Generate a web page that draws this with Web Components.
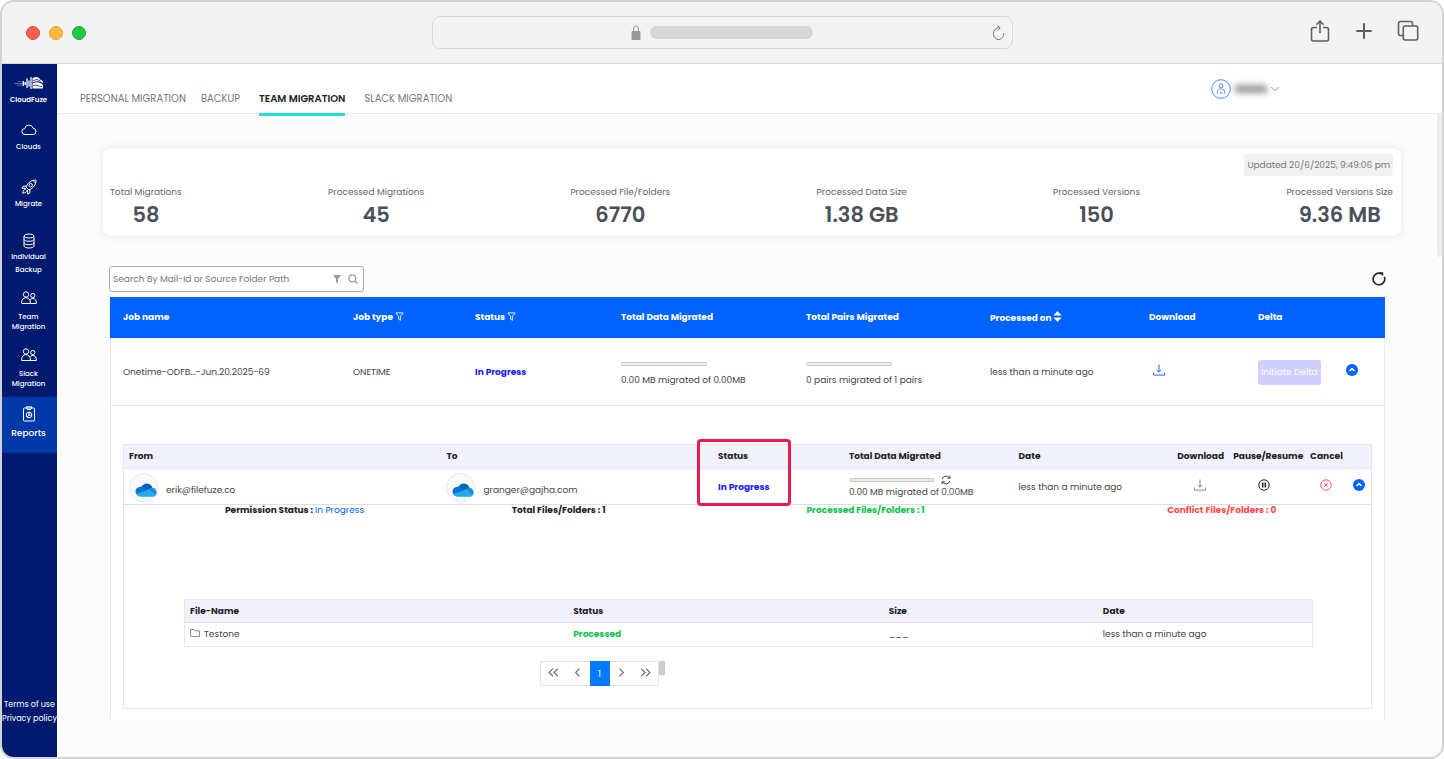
<!DOCTYPE html>
<html lang="en">
<head>
<meta charset="utf-8">
<meta name="viewport" content="width=device-width, initial-scale=1">
<title>CloudFuze - Reports</title>
<style>
    body, html {
        height: 100%;
        margin: 0;
        padding: 0;
        background: #fff;
    }

    body {
        font-family: Poppins, Inter, "Open Sans", sans-serif;
        font-size: 9px;
        color: #444;
    }
</style>
</head>
<body>
<browser-window>
    <side-bar slot="side"></side-bar>
    <top-nav></top-nav>
    <report-page></report-page>
</browser-window>

<script>
const icons = {
    lock: ['0 0 10 16', '<rect x=".5" y="6" width="9" height="9" rx="1" fill="currentColor" stroke="none"/><path d="M2.500 6.500V4a2.500 3 0 0 1 5 0v2.500"/>'],
    reload: ['0 0 12 16', '<path d="M6.500 2.600A5.200 6 0 1 0 11.300 8M5 .5l2.600 2.200L5.500 5.500"/>'],
    share: ['0 0 20 22', '<path d="M7 7.500H3.500a2 2 0 0 0-2 2V19a2 2 0 0 0 2 2h13a2 2 0 0 0 2-2V9.500a2 2 0 0 0-2-2H13M10 13V1.300M6.300 4.800 10 1.200l3.700 3.600"/>'],
    plus: ['0 0 16 16', '<path d="M8 .3v15.400M.3 8h15.400"/>'],
    tabs: ['0 0 22 22', '<rect x="6.300" y="6" width="14.400" height="14" rx="2"/><path d="M6 15.500H3.500a2 2 0 0 1-2-2v-10a2 2 0 0 1 2-2h10a2 2 0 0 1 2 2V6"/>'],
    logo: ['0 0 30 14', '<path d="M.5 7.500h10" stroke-width=".8" opacity=".5"/><path d="M4 5.500h4M3 9.200h5" stroke-width=".6" opacity=".5"/><path d="M9.300 5v5M11.200 6v3M13 2.500v9.500M15 4.500v6M17 1v12" stroke-width="1.300"/><path d="M18.500 2.200C22 .2 25 1 26 3.500c2 .3 3 2 3 4-3-2.800-6-3-10.500-1z" fill="currentColor" stroke="none"/><path d="M18.500 7.500c4-2 7.500-1.400 10.500 1.500v3.500H18.500z" fill="currentColor" stroke="none"/><path d="M19 9.800c3-2 5 .6 9 .8M19 4.800c3-1.800 5-1.300 7.500.2" stroke="#001a6f" stroke-width=".8"/>'],
    cloud: ['0 0 16 16', '<path d="M4 12.500a3 3 0 0 1-.2-6A4.200 4.200 0 0 1 12 6.200a3.200 3.200 0 0 1 .5 6.300z"/>'],
    rocket: ['0 0 16 16', '<path d="M5 8C7 3.500 10.500 1 15 1c0 4.500-2.500 8-7 10zM5.500 7.200 2.200 7 1 9.200l4 .2M8.800 10.500 9 13.800 6.800 15l-.4-4.200M4.500 10.500C2.500 10.500 2 12 1.800 14.200c2.200-.2 3.700-.7 3.700-2.700M12 1.500 14.500 4"/><circle cx="9.700" cy="6.200" r="1.700"/>'],
    database: ['0 0 16 16', '<ellipse cx="8" cy="3" rx="5" ry="2"/><path d="M3 3v10c0 1.200 2.200 2 5 2s5-.8 5-2V3M3 6.300c0 1.200 2.200 2 5 2s5-.8 5-2M3 9.700c0 1.200 2.200 2 5 2s5-.8 5-2"/>'],
    people: ['0 0 16 16', '<circle cx="5" cy="4.500" r="2.700"/><circle cx="11.800" cy="5.500" r="2.100"/><path d="M.7 13.500V12a4.300 4.300 0 0 1 8.600 0v1.500zM9.300 13.500h6V12a3.500 3.500 0 0 0-6-2.500"/>'],
    report: ['0 0 16 16', '<rect x="2.500" y="2" width="11" height="13" rx=".8"/><path d="M5.500 2V.8h5V2l-.7 1.500H6.200z"/><circle cx="8" cy="9" r="2.800"/><path d="M8 6.200V9h2.800M8 9l-2 2"/>'],
    user: ['0 0 20 20', '<circle cx="10" cy="10" r="9.300"/><circle cx="10" cy="6.800" r="2"/><path d="M6.300 15v-1.800a3.700 3.500 0 0 1 7.400 0V15M8.700 15l1.300-2 1.300 2" stroke-width=".8"/>'],
    down: ['0 0 8 6', '<path d="M.5 1.200 4 4.700l3.500-3.500"/>'],
    funnel: ['0 0 10 10', '<path d="M1 1h8L6 5v4.200L4 8V5z"/>'],
    search: ['0 0 10 10', '<circle cx="4.300" cy="4.300" r="3.500"/><path d="m7 7 2.500 2.500"/>'],
    refresh: ['0 0 14 14', '<path d="M9.500 1.800A5.800 5.800 0 1 0 12.300 4.800"/><path d="M7.200.3h4v4z" fill="currentColor" stroke="none"/>'],
    sort: ['0 0 10 12', '<path d="M5 0 9.500 5H.5zM5 12 .5 7h9z" fill="currentColor" stroke="none"/>'],
    download: ['0 0 12 12', '<path d="M6 .5V8M3.800 6 6 8.200 8.200 6M.6 8.500v2.600h10.800V8.500"/>'],
    up: ['0 0 12 12', '<circle cx="6" cy="6" r="6" fill="currentColor" stroke="none"/><path d="M3.500 7 6 4.600 8.500 7" stroke="#fff" stroke-width="1.500"/>'],
    sync: ['0 0 10 10', '<path d="M1.200 4A4 4 0 0 1 8.500 3M8.800 6A4 4 0 0 1 1.500 7M8.900.8v2.500H6.400M1.100 9.200V6.700h2.500"/>'],
    pause: ['0 0 12 12', '<circle cx="6" cy="6" r="5.200"/><path d="M4.700 3.600v4.800M7.300 3.600v4.800" stroke-width="1.500"/>'],
    cancel: ['0 0 12 12', '<circle cx="6" cy="6" r="5.200"/><path d="m4.300 4.300 3.400 3.400M7.700 4.300 4.300 7.700"/>'],
    folder: ['0 0 10 8', '<path d="M.6 7.400V.6H4l1 1.200h4.400v5.600z"/>'],
    first: ['0 0 10 8', '<path d="M4.500.5 1 4l3.500 3.500M9 .5 5.500 4 9 7.500"/>'],
    prev: ['0 0 10 8', '<path d="M6.800.5 3.300 4l3.500 3.500"/>'],
    next: ['0 0 10 8', '<path d="M3.200.5 6.700 4 3.200 7.500"/>'],
    last: ['0 0 10 8', '<path d="M1 .5 4.500 4 1 7.500M5.500.5 9 4 5.500 7.500"/>'],
    onedrive: ['0 0 22 14', '<g stroke="none"><path d="M6.500 4C8 .8 11-.3 14 1c2 .8 3 2.200 3.300 4L11 8z" fill="#0364b8"/><path d="M1.500 11.500C-.8 8.500 1 4 5.500 3.800c2-.1 3.200.6 5 1.700l3 2z" fill="#0078d4"/><path d="M13.500 7C15.500 4.200 19 4.300 20.500 6.500c1.500 2 1.700 4.300.2 5.800z" fill="#1490df"/><path d="M1.500 11.500 12.500 6.800l8.700 4.700c-.8 1.500-1.700 2.200-3.200 2.200H5.500c-1.800 0-3.200-.8-4-2.200z" fill="#28a8ea"/></g>'],
};

class UiIcon extends HTMLElement {

    constructor() {
        super();
        this.attachShadow({mode: "open"});
    }

    connectedCallback() {
        const [box, shape] = icons[this.getAttribute("name")];
        this.shadowRoot.innerHTML = `
        <style>
            :host {
                display: inline-block;
                width: 12px;
                height: 12px;
                line-height: 0;
                flex: none;
            }

            svg {
                width: 100%;
                height: 100%;
                fill: var(--icon-fill, none);
                stroke: currentColor;
                stroke-width: var(--icon-stroke, 1);
            }
        </style>
        <svg viewBox="${box}" aria-hidden="true">${shape}</svg>`;
    }
}

class BrowserWindow extends HTMLElement {

    constructor() {
        super();
        this.attachShadow({mode: "open"});
    }

    connectedCallback() {
        this.shadowRoot.innerHTML = `
        <style>
            :host {
                display: flex;
                flex-direction: column;
                box-sizing: border-box;
                height: 100vh;
                border: 2px solid #d3d3d3;
                border-radius: 14px;
                overflow: hidden;
            }

            button {
                padding: 0;
                border: 0;
                background: none;
                color: inherit;
                line-height: 0;
            }

            .bar {
                display: grid;
                grid-template-columns: 1fr 581px 1fr;
                align-items: center;
                height: 61px;
                flex: none;
                background: #f3f3f3;
                border-bottom: 1px solid #dcdcdc;
                color: #5f5f5f;
            }

            .lights {
                display: flex;
                gap: 9px;
                padding-left: 24px;
            }

            .lights button {
                box-sizing: border-box;
                width: 14px;
                height: 14px;
                border-radius: 50%;
                border: 1px solid #e2483f;
                background: #ff5d55;
            }

            .lights .min {
                border-color: #e0a02f;
                background: #ffba3c;
            }

            .lights .max {
                border-color: #16aa36;
                background: #22c748;
            }

            .address {
                display: flex;
                align-items: center;
                justify-content: center;
                position: relative;
                box-sizing: border-box;
                height: 33px;
                border: 1px solid #d9d9d9;
                border-radius: 8px;
                gap: 9px;
                color: #999;
            }

            .address .url {
                width: 163px;
                height: 13px;
                border-radius: 7px;
                background: #d6d6d6;
            }

            .address ui-icon {
                width: 10px;
                height: 16px;
            }

            .address button {
                position: absolute;
                right: 7px;
                color: #777;
            }

            .address button ui-icon {
                width: 13px;
            }

            .tools {
                display: flex;
                align-items: center;
                justify-content: flex-end;
                gap: 25px;
                padding: 0 23px 3px 0;
                --icon-stroke: 1.6;
            }

            .tools ui-icon {
                width: 22px;
                height: 22px;
            }

            .tools .add ui-icon {
                width: 16px;
                height: 16px;
                --icon-stroke: 2;
            }

            .body {
                display: flex;
                flex: 1;
                min-height: 0;
            }

            main {
                display: flex;
                flex-direction: column;
                flex: 1;
                min-width: 0;
            }
        </style>
        <div class="bar">
            <div class="lights">
                <button aria-label="Close"></button>
                <button class="min" aria-label="Minimize"></button>
                <button class="max" aria-label="Maximize"></button>
            </div>
            <div class="address">
                <ui-icon name="lock"></ui-icon>
                <span class="url"></span>
                <button aria-label="Reload"><ui-icon name="reload"></ui-icon></button>
            </div>
            <div class="tools">
                <button aria-label="Share"><ui-icon name="share"></ui-icon></button>
                <button class="add" aria-label="New tab"><ui-icon name="plus"></ui-icon></button>
                <button aria-label="Tabs"><ui-icon name="tabs"></ui-icon></button>
            </div>
        </div>
        <div class="body">
            <slot name="side"></slot>
            <main><slot></slot></main>
        </div>`;
    }
}

class SideItem extends HTMLElement {

    constructor() {
        super();
        this.attachShadow({mode: "open"});
    }

    connectedCallback() {
        this.shadowRoot.innerHTML = `
        <style>
            :host {
                display: block;
                height: 57px;
            }

            a {
                display: flex;
                flex-direction: column;
                align-items: center;
                gap: 6px;
                box-sizing: border-box;
                height: 100%;
                padding: 7px 2px 0 0;
                color: #fff;
                font-size: 7px;
                font-weight: 500;
                line-height: 10px;
                text-align: center;
                text-decoration: none;
            }

            ui-icon {
                width: 16px;
                height: 16px;
            }

            :host([single]) a {
                padding-top: 10px;
                gap: 4px;
            }

            :host([loose]) a {
                gap: 1px;
                line-height: 13px;
            }

            :host([active]) {
                height: 56px;
            }

            :host([active]) a {
                padding-top: 9px;
                background: #0038a8;
                font-size: 9px;
            }
        </style>
        <a href="#"><ui-icon name="${this.getAttribute("icon")}"></ui-icon><span><slot></slot></span></a>`;
    }
}

class SideBar extends HTMLElement {

    constructor() {
        super();
        this.attachShadow({mode: "open"});
    }

    connectedCallback() {
        this.shadowRoot.innerHTML = `
        <style>
            :host {
                display: flex;
                flex-direction: column;
                flex: none;
                width: 55px;
                background: #001a6f;
                color: #fff;
                font-size: 8px;
                font-weight: 500;
            }

            .logo {
                display: flex;
                flex-direction: column;
                align-items: center;
                gap: 5px;
                box-sizing: border-box;
                height: 48px;
                padding: 12px 2px 0 0;
                font-size: 7px;
                line-height: 10px;
                font-weight: 600;
            }

            .logo ui-icon {
                width: 30px;
                height: 14px;
            }

            footer {
                display: flex;
                flex-direction: column;
                align-items: center;
                margin-top: auto;
                padding-bottom: 31px;
                font-weight: 400;
                line-height: 14px;
                white-space: nowrap;
            }

            a {
                color: inherit;
                text-decoration: none;
            }
        </style>
        <div class="logo"><ui-icon name="logo"></ui-icon><span>CloudFuze</span></div>
        <side-item single icon="cloud">Clouds</side-item>
        <side-item single icon="rocket">Migrate</side-item>
        <side-item loose icon="database">Individual<br>Backup</side-item>
        <side-item icon="people">Team<br>Migration</side-item>
        <side-item icon="people">Slack<br>Migration</side-item>
        <side-item active icon="report">Reports</side-item>
        <footer>
            <a href="#">Terms of use</a>
            <a href="#">Privacy policy</a>
        </footer>`;
    }
}

class TopNav extends HTMLElement {

    constructor() {
        super();
        this.attachShadow({mode: "open"});
    }

    connectedCallback() {
        this.shadowRoot.innerHTML = `
        <style>
            :host {
                display: flex;
                align-items: flex-end;
                justify-content: space-between;
                box-sizing: border-box;
                height: 50px;
                flex: none;
                padding: 0 163px 0 23px;
                background: #fff;
                border-bottom: 1px solid #e9e9e9;
            }

            nav {
                display: flex;
                gap: 15px;
            }

            a {
                height: 28px;
                line-height: 28px;
                font-size: 10px;
                color: #777;
                text-decoration: none;
                box-sizing: border-box;
            }

            a.on {
                margin: 0 4px -3px 4px;
                height: 31px;
                border-bottom: 3px solid #22dfd5;
                font-weight: 600;
                color: #222;
                position: relative;
                z-index: 1;
            }

            button {
                display: flex;
                align-items: center;
                gap: 4px;
                height: 20px;
                margin-bottom: 14px;
                padding: 0;
                border: 0;
                background: none;
                color: #888;
            }

            .avatar {
                width: 20px;
                height: 20px;
                color: #4588f5;
            }

            .name {
                width: 32px;
                height: 8px;
                background: #999;
                filter: blur(3px);
            }

            .arrow {
                width: 8px;
                height: 6px;
            }
        </style>
        <nav>
            <a href="#">PERSONAL MIGRATION</a>
            <a href="#">BACKUP</a>
            <a href="#" class="on">TEAM MIGRATION</a>
            <a href="#">SLACK MIGRATION</a>
        </nav>
        <button aria-label="Account"><ui-icon class="avatar" name="user"></ui-icon><span class="name"></span><ui-icon class="arrow" name="down"></ui-icon></button>`;
    }
}

class StatItem extends HTMLElement {

    constructor() {
        super();
        this.attachShadow({mode: "open"});
    }

    connectedCallback() {
        this.shadowRoot.innerHTML = `
        <style>
            :host {
                display: block;
                text-align: center;
            }

            .label {
                font-size: 9px;
                line-height: 14px;
                color: #666;
            }

            .value {
                font-size: 21px;
                font-weight: 600;
                line-height: 32px;
                color: #495057;
            }
        </style>
        <div class="label">${this.getAttribute("label")}</div>
        <div class="value"><slot></slot></div>`;
    }
}

class ReportPage extends HTMLElement {

    constructor() {
        super();
        this.attachShadow({mode: "open"});
    }

    connectedCallback() {
        this.shadowRoot.innerHTML = `
        <style>
            :host {
                display: block;
                position: relative;
                flex: 1;
                min-height: 0;
                padding: 34px 41px 0 46px;
                background: #fcfcfc;
                overflow: hidden;
            }

            .thumb {
                position: absolute;
                top: 0;
                right: 0;
                width: 5px;
                height: 143px;
                background: #ececec;
                border-radius: 0 0 3px 3px;
            }

            .stats {
                box-sizing: border-box;
                height: 88px;
                padding: 6px 8px 0 7px;
                background: #fff;
                border-radius: 8px;
                box-shadow: 0 0 8px #e9e9e9;
            }

            .updated {
                width: fit-content;
                margin: 0 0 9px auto;
                padding: 0 3px;
                line-height: 22px;
                border-radius: 3px;
                background: #f1f1f1;
                color: #777;
            }

            .row {
                display: flex;
                justify-content: space-between;
            }

            .bar {
                display: flex;
                align-items: center;
                justify-content: space-between;
                margin: 30px 15px 5px 6px;
            }

            .search {
                display: flex;
                align-items: center;
                gap: 6px;
                box-sizing: border-box;
                width: 255px;
                height: 26px;
                padding: 0 5px 0 3px;
                border: 1px solid #aaa;
                border-radius: 3px;
                background: #fff;
                color: #999;
            }

            .search input {
                flex: 1;
                min-width: 0;
                padding: 0;
                border: 0;
                outline: 0;
                font: inherit;
                color: #666;
            }

            .search input::placeholder {
                color: #777;
            }

            .search ui-icon {
                width: 10px;
                height: 10px;
                --icon-stroke: 1.3;
            }

            .search .solid {
                --icon-fill: currentColor;
                --icon-stroke: 0;
            }

            button {
                padding: 0;
                border: 0;
                background: none;
                font: inherit;
                color: inherit;
                line-height: 0;
            }

            .refresh {
                color: #222;
                --icon-stroke: 1.6;
            }

            .refresh ui-icon {
                width: 14px;
                height: 14px;
            }

            .panel {
                box-sizing: border-box;
                height: 422px;
                margin: 0 16px 0 7px;
                background: #fff;
                box-shadow: inset 1px 0 #e9e9e9, inset -1px 0 #e9e9e9;
            }

            table {
                width: 100%;
                table-layout: fixed;
                border-collapse: separate;
                border-spacing: 0;
            }

            th, td {
                box-sizing: border-box;
                padding: 0 0 0 5px;
                text-align: left;
                white-space: nowrap;
            }

            th {
                font-weight: 700;
                color: #222;
            }

            .jobs th, .jobs td {
                padding-left: 13px;
            }

            .jobs th {
                height: 41px;
                background: #0062ff;
                color: #fff;
            }

            .jobs td {
                height: 68px;
                padding-top: 1px;
                border-bottom: 1px solid #e6e6e6;
            }

            .jobs th ui-icon {
                width: 9px;
                height: 9px;
                vertical-align: -1px;
            }

            .jobs th .sort {
                height: 11px;
                vertical-align: -1px;
            }

            .jobs .state, .state {
                font-weight: 700;
                color: #1d20f5;
            }

            progress {
                display: block;
                box-sizing: border-box;
                width: 86px;
                height: 4px;
                appearance: none;
                border: 1px solid #c4c4c4;
                border-radius: 2px;
                background: #eee;
                overflow: hidden;
            }

            progress::-webkit-progress-bar {
                background: #eee;
            }

            .jobs progress {
                margin: 4px 0 8px;
            }

            .jobs .save {
                padding-left: 17px;
                color: #1668f5;
            }

            .jobs .toggle, .pairs .toggle {
                color: #0062ff;
            }

            .delta {
                box-sizing: border-box;
                height: 25px;
                padding: 0 3px;
                border-radius: 3px;
                background: #d0d0ff;
                color: #fff;
                line-height: 25px;
            }

            .details {
                height: 264px;
                margin: 38px 13px 0;
                border: 1px solid #e6e6e6;
                border-top: 0;
            }

            .pairs th {
                height: 25px;
                background: #f2f2ff;
                border: solid #e6e6e6;
                border-width: 1px 0;
            }

            .pairs td {
                height: 36px;
                padding-top: 1px;
                border-bottom: 1px solid #dedede;
            }

            .pairs .mid {
                padding: 0;
                text-align: center;
            }

            .pairs .hold {
                padding-right: 6px;
            }

            .pairs .marked {
                position: relative;
            }

            .mark {
                position: absolute;
                top: -6px;
                left: -16px;
                box-sizing: border-box;
                width: 94px;
                height: 67px;
                border: 3px solid #e81c50;
                border-radius: 4px;
                pointer-events: none;
            }

            .account {
                display: flex;
                align-items: center;
                gap: 8px;
            }

            .account span {
                padding-top: 6px;
            }

            .drive {
                display: flex;
                align-items: center;
                justify-content: center;
                box-sizing: border-box;
                width: 29px;
                height: 29px;
                padding: 5px 0 0 4px;
                border: 1px solid #e6e6e6;
                border-radius: 50%;
                background: #fafafa;
            }

            .drive ui-icon {
                width: 22px;
                height: 14px;
            }

            .moved {
                display: flex;
                align-items: center;
                gap: 6px;
                margin-bottom: 1px;
                line-height: 10px;
            }

            .moved ui-icon {
                width: 10px;
                height: 10px;
            }

            .totals {
                display: grid;
                grid-template-columns: 287fr 295fr 361fr 204fr;
                padding-left: 101px;
                line-height: 10px;
                font-weight: 700;
                color: #222;
                white-space: nowrap;
            }

            .totals a {
                font-weight: 400;
                color: #0062ff;
                text-decoration: none;
            }

            .totals .ok, .ok {
                font-weight: 700;
                color: #10c250;
            }

            .totals .bad {
                color: #ff4a4a;
            }

            .files {
                margin: 84px 58px 0 60px;
                border: 1px solid #e6e6ec;
            }

            .files th {
                height: 23px;
                background: #f2f2ff;
                border-bottom: 1px solid #e0e0ea;
            }

            .files td {
                height: 23px;
            }

            .files ui-icon {
                width: 10px;
                height: 8px;
                margin-right: 4px;
                color: #888;
            }

            .pages {
                display: flex;
                width: 125px;
                margin: 14px 0 0 416px;
            }

            .pages nav {
                display: flex;
                flex: 1;
                box-sizing: border-box;
                height: 25px;
                border: 1px solid #e2e2e2;
                border-radius: 2px;
                color: #666;
            }

            .pages nav button {
                flex: 1;
                padding-bottom: 3px;
            }

            .pages nav .now {
                flex: 0 0 20px;
                margin: -1px 0;
                padding: 0;
                background: #007bff;
                color: #fff;
            }

            .pages ui-icon {
                width: 11px;
                height: 9px;
            }

            .grip {
                width: 6px;
                height: 14px;
                background: #ccc;
            }
        </style>
        <div class="thumb"></div>
        <section class="stats">
            <div class="updated">Updated 20/6/2025, 9:49:06 pm</div>
            <div class="row">
                <stat-item label="Total Migrations">58</stat-item>
                <stat-item label="Processed Migrations">45</stat-item>
                <stat-item label="Processed File/Folders">6770</stat-item>
                <stat-item label="Processed Data Size">1.38 GB</stat-item>
                <stat-item label="Processed Versions">150</stat-item>
                <stat-item label="Processed Versions Size">9.36 MB</stat-item>
            </div>
        </section>
        <div class="bar">
            <div class="search">
                <input type="text" aria-label="Search" placeholder="Search By Mail-Id or Source Folder Path">
                <ui-icon class="solid" name="funnel"></ui-icon>
                <ui-icon name="search"></ui-icon>
            </div>
            <button class="refresh" aria-label="Refresh"><ui-icon name="refresh"></ui-icon></button>
        </div>
        <section class="panel">
            <table class="jobs">
                <colgroup>
                    <col style="width: 18.04%"><col style="width: 9.57%"><col style="width: 11.45%">
                    <col style="width: 14.51%"><col style="width: 14.43%"><col style="width: 12.47%">
                    <col style="width: 8.55%"><col style="width: 6.9%"><col>
                </colgroup>
                <thead>
                    <tr>
                        <th>Job name</th>
                        <th>Job type <ui-icon name="funnel"></ui-icon></th>
                        <th>Status <ui-icon name="funnel"></ui-icon></th>
                        <th>Total Data Migrated</th>
                        <th>Total Pairs Migrated</th>
                        <th>Processed on <ui-icon class="sort" name="sort"></ui-icon></th>
                        <th>Download</th>
                        <th>Delta</th>
                        <th></th>
                    </tr>
                </thead>
                <tbody>
                    <tr>
                        <td>Onetime-ODFB...-Jun.20.2025-69</td>
                        <td>ONETIME</td>
                        <td class="state">In Progress</td>
                        <td><progress value="0" max="1" aria-label="Data migrated"></progress>0.00 MB migrated of 0.00MB</td>
                        <td><progress value="0" max="1" aria-label="Pairs migrated"></progress>0 pairs migrated of 1 pairs</td>
                        <td>less than a minute ago</td>
                        <td class="save"><button aria-label="Download"><ui-icon name="download"></ui-icon></button></td>
                        <td><button class="delta">Initiate Delta</button></td>
                        <td class="toggle"><button aria-label="Collapse job"><ui-icon name="up"></ui-icon></button></td>
                    </tr>
                </tbody>
            </table>
            <div class="details">
                <table class="pairs">
                    <colgroup>
                        <col style="width: 25.46%"><col style="width: 21.78%"><col style="width: 10.49%">
                        <col style="width: 13.61%"><col style="width: 12.73%"><col style="width: 4.48%">
                        <col style="width: 6.17%"><col style="width: 3.36%"><col>
                    </colgroup>
                    <thead>
                        <tr>
                            <th>From</th>
                            <th>To</th>
                            <th class="marked">Status<span class="mark"></span></th>
                            <th>Total Data Migrated</th>
                            <th>Date</th>
                            <th>Download</th>
                            <th>Pause/Resume</th>
                            <th>Cancel</th>
                            <th></th>
                        </tr>
                    </thead>
                    <tbody>
                        <tr>
                            <td><div class="account"><div class="drive"><ui-icon name="onedrive"></ui-icon></div><span>erik@filefuze.co</span></div></td>
                            <td><div class="account"><div class="drive"><ui-icon name="onedrive"></ui-icon></div><span>granger@gajha.com</span></div></td>
                            <td class="state">In Progress</td>
                            <td><div class="moved"><progress value="0" max="1" aria-label="Data migrated"></progress><ui-icon name="sync"></ui-icon></div>0.00 MB migrated of 0.00MB</td>
                            <td>less than a minute ago</td>
                            <td class="mid" style="color: #888"><button aria-label="Download"><ui-icon name="download"></ui-icon></button></td>
                            <td class="mid hold" style="color: #222"><button aria-label="Pause"><ui-icon name="pause"></ui-icon></button></td>
                            <td class="mid" style="color: #f55"><button aria-label="Cancel"><ui-icon name="cancel"></ui-icon></button></td>
                            <td class="mid toggle"><button aria-label="Collapse pair"><ui-icon name="up"></ui-icon></button></td>
                        </tr>
                    </tbody>
                </table>
                <div class="totals">
                    <span>Permission Status : <a href="#">In Progress</a></span>
                    <span>Total Files/Folders : 1</span>
                    <span class="ok">Processed Files/Folders : 1</span>
                    <span class="bad">Conflict Files/Folders : 0</span>
                </div>
                <div class="files">
                    <table>
                        <colgroup><col style="width: 34%"><col style="width: 28%"><col style="width: 19%"><col></colgroup>
                        <thead>
                            <tr><th>File-Name</th><th>Status</th><th>Size</th><th>Date</th></tr>
                        </thead>
                        <tbody>
                            <tr><td><ui-icon name="folder"></ui-icon>Testone</td><td class="ok">Processed</td><td>___</td><td>less than a minute ago</td></tr>
                        </tbody>
                    </table>
                </div>
                <div class="pages">
                    <nav aria-label="Pages">
                        <button aria-label="First"><ui-icon name="first"></ui-icon></button>
                        <button aria-label="Previous"><ui-icon name="prev"></ui-icon></button>
                        <button class="now">1</button>
                        <button aria-label="Next"><ui-icon name="next"></ui-icon></button>
                        <button aria-label="Last"><ui-icon name="last"></ui-icon></button>
                    </nav>
                    <span class="grip"></span>
                </div>
            </div>
        </section>`;
    }
}

customElements.define("ui-icon", UiIcon);
customElements.define("browser-window", BrowserWindow);
customElements.define("side-item", SideItem);
customElements.define("side-bar", SideBar);
customElements.define("top-nav", TopNav);
customElements.define("stat-item", StatItem);
customElements.define("report-page", ReportPage);
</script>
</body>
</html>
